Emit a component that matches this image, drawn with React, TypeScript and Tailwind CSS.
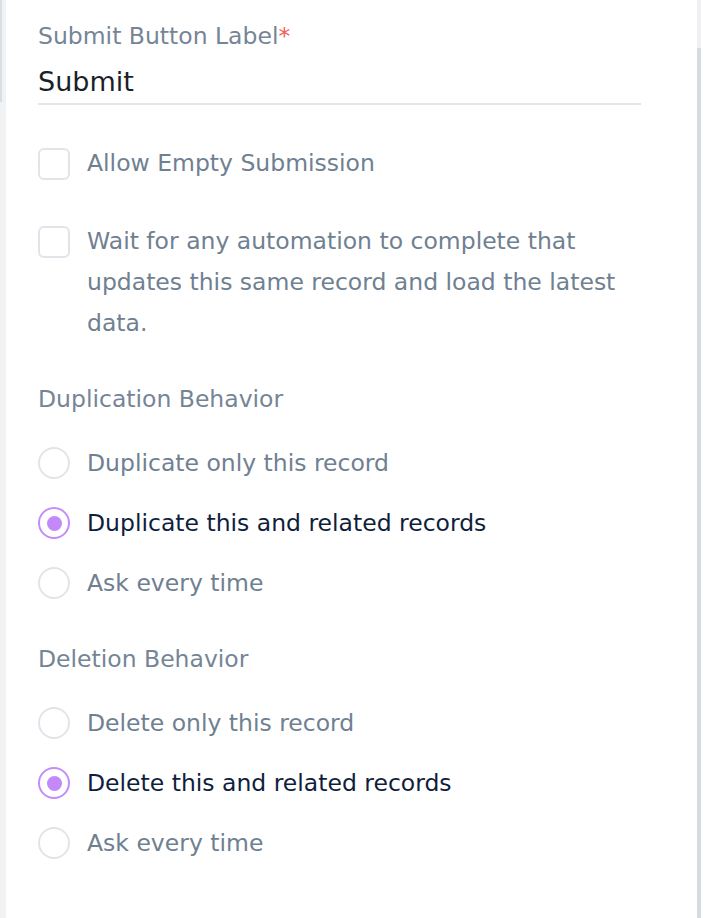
import { useState } from "react";

type Option = { value: string; label: string };

const duplicationOptions: Option[] = [
  { value: "only", label: "Duplicate only this record" },
  { value: "related", label: "Duplicate this and related records" },
  { value: "ask", label: "Ask every time" },
];

const deletionOptions: Option[] = [
  { value: "only", label: "Delete only this record" },
  { value: "related", label: "Delete this and related records" },
  { value: "ask", label: "Ask every time" },
];

function Checkbox({ label, checked, onChange }: { label: string; checked: boolean; onChange: () => void }) {
  return (
    <label className="flex cursor-pointer items-start gap-[17px]">
      <span
        onClick={onChange}
        className={`mt-[5px] h-[32px] w-[32px] shrink-0 rounded-[6px] border-2 ${
          checked ? "border-[#c084fc] bg-[#c084fc]" : "border-[#e1e5ea] bg-white"
        }`}
      />
      <span className="text-[23.5px] leading-[41px] text-[#6f8091]">{label}</span>
    </label>
  );
}

function RadioGroup({
  title, options, value, onChange,
}: { title: string; options: Option[]; value: string; onChange: (v: string) => void }) {
  return (
    <div>
      <div className="text-[23.5px] leading-[28px] text-[#758596]">{title}</div>
      <div className="mt-[34px] flex flex-col gap-[28px]">
        {options.map((o) => {
          const on = o.value === value;
          return (
            <div key={o.value} onClick={() => onChange(o.value)} className="flex h-[32px] cursor-pointer items-center gap-[17px]">
              <span
                className={`flex h-[32px] w-[32px] shrink-0 items-center justify-center rounded-full border-2 ${
                  on ? "border-[#c58cfa]" : "border-[#e1e5ea]"
                }`}
              >
                {on && <span className="h-[15px] w-[15px] rounded-full bg-[#c389f9]" />}
              </span>
              <span className={`text-[23.5px] leading-[32px] ${on ? "text-[#0f1e3c]" : "text-[#6f8091]"}`}>{o.label}</span>
            </div>
          );
        })}
      </div>
    </div>
  );
}

export default function App() {
  const [allowEmpty, setAllowEmpty] = useState(false);
  const [waitAuto, setWaitAuto] = useState(false);
  const [dup, setDup] = useState("related");
  const [del, setDel] = useState("related");

  return (
    <div className="flex h-[918px] w-[706px] overflow-hidden bg-white font-['DejaVu_Sans',sans-serif]">
      {/* left edge of the neighbouring pane */}
      <div className="flex w-[6px] shrink-0 bg-[#f0f2f4]">
        <div className="h-[102px] w-[2px] bg-[#d9dee3]" />
      </div>

      <div className="flex-1 pl-[32px] pr-[56px] pt-[22px]">
        <div className="text-[23.5px] leading-[28px] text-[#758596]">
          Submit Button Label<span className="text-[#f25c5c]">*</span>
        </div>
        <div className="mt-[16px] border-b-2 border-[#e2e6ea] pb-[5px] text-[27px] leading-[32px] text-[#1a1f29]">
          Submit
        </div>

        <div className="mt-[38px] flex flex-col gap-[37px]">
          <Checkbox label="Allow Empty Submission" checked={allowEmpty} onChange={() => setAllowEmpty(!allowEmpty)} />
          <Checkbox
            label="Wait for any automation to complete that updates this same record and load the latest data."
            checked={waitAuto}
            onChange={() => setWaitAuto(!waitAuto)}
          />
        </div>

        <div className="mt-[41px] flex flex-col gap-[46px]">
          <RadioGroup title="Duplication Behavior" options={duplicationOptions} value={dup} onChange={setDup} />
          <RadioGroup title="Deletion Behavior" options={deletionOptions} value={del} onChange={setDel} />
        </div>
      </div>

      {/* scrollbar */}
      <div className="flex w-[9px] shrink-0 flex-col">
        <div className="flex flex-1 flex-col">
          <div className="h-[48px] w-[4px] bg-[#eef0f3]" />
          <div className="flex-1 w-[4px] bg-[#d5dbe1]" />
        </div>
      </div>
    </div>
  );
}
